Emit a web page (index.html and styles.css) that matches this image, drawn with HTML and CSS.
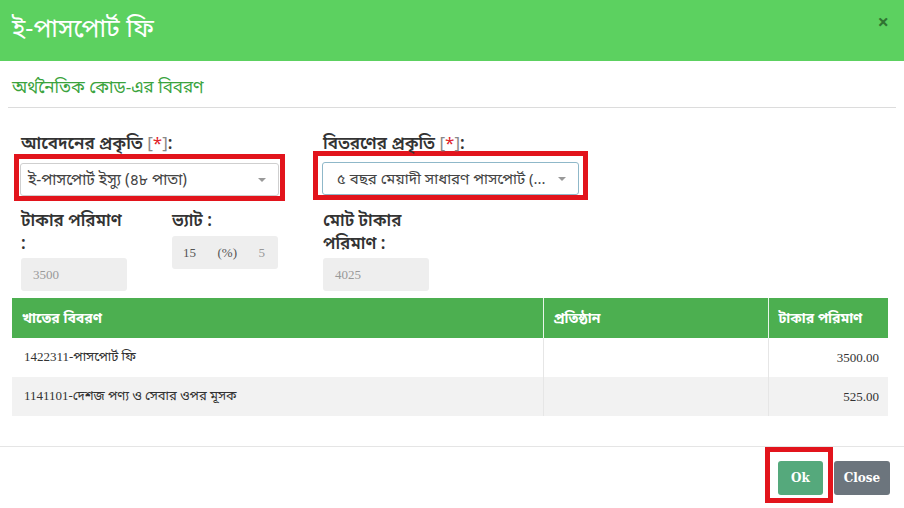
FILE: index.html
```html
<!DOCTYPE html>
<html lang="bn">
<head>
    <meta charset="UTF-8">
    <title>ই-পাসপোর্ট ফি</title>
    <link rel="stylesheet" href="styles.css">
</head>
<body>
    <div class="modal">
        <div class="modal-header">
            <h2>ই-পাসপোর্ট ফি</h2>
            <span class="close-x">&times;</span>
        </div>

        <div class="modal-body">
            <h4 class="section-title">অর্থনৈতিক কোড-এর বিবরণ</h4>

            <div class="form-row">
                <div class="col">
                    <label>আবেদনের প্রকৃতি <span class="req">[<b>*</b>]</span>:</label>
                    <div class="mark mark-one">
                        <div class="select">
                            <span>ই-পাসপোর্ট ইস্যু (৪৮ পাতা)</span>
                            <i class="caret"></i>
                        </div>
                    </div>
                </div>
                <div class="col col-two">
                    <label>বিতরণের প্রকৃতি <span class="req">[<b>*</b>]</span>:</label>
                    <div class="mark mark-two">
                        <div class="select select-blue">
                            <span>৫ বছর মেয়াদী সাধারণ পাসপোর্ট (...</span>
                            <i class="caret"></i>
                        </div>
                    </div>
                </div>
            </div>

            <div class="form-row amounts">
                <div class="small-col">
                    <label>টাকার পরিমাণ<br>:</label>
                    <div class="input">3500</div>
                </div>
                <div class="small-col">
                    <label>ভ্যাট :</label>
                    <div class="input-group">
                        <span>15</span>
                        <span>(%)</span>
                        <span>5</span>
                    </div>
                </div>
                <div class="small-col">
                    <label>মোট টাকার<br>পরিমাণ :</label>
                    <div class="input">4025</div>
                </div>
            </div>

            <table class="fee-table">
                <thead>
                    <tr>
                        <th class="c-desc">খাতের বিবরণ</th>
                        <th class="c-org">প্রতিষ্ঠান</th>
                        <th class="c-amt">টাকার পরিমাণ</th>
                    </tr>
                </thead>
                <tbody>
                    <tr>
                        <td>1422311-পাসপোর্ট ফি</td>
                        <td></td>
                        <td class="num">3500.00</td>
                    </tr>
                    <tr>
                        <td>1141101-দেশজ পণ্য ও সেবার ওপর মূসক</td>
                        <td></td>
                        <td class="num">525.00</td>
                    </tr>
                </tbody>
            </table>
        </div>

        <div class="modal-footer">
            <div class="mark mark-ok">
                <button class="btn btn-ok">Ok</button>
            </div>
            <button class="btn btn-close">Close</button>
        </div>
    </div>
</body>
</html>
```

FILE: styles.css
```css
* {
    margin: 0;
    padding: 0;
    box-sizing: border-box;
}

body {
    font-family: "Noto Sans", "Noto Sans Bengali", sans-serif;
    background: #ffffff;
    color: #333;
    width: 904px;
    height: 508px;
    overflow: hidden;
}

.modal-header {
    background: #5cd160;
    height: 61px;
    display: flex;
    align-items: center;
    justify-content: space-between;
    padding: 0 15px 4px 12px;
}

.modal-header h2 {
    color: #fff;
    font-size: 25px;
    font-weight: 400;
}

.close-x {
    color: #1d4d1e;
    font-size: 20px;
    font-weight: bold;
    opacity: 0.7;
    margin-bottom: 14px;
}

.modal-body {
    padding: 0 12px 0 12px;
}

.section-title {
    color: #3aa33d;
    font-size: 17px;
    font-weight: 400;
    padding: 14px 0 7px 4px;
    margin: 0 -4px;
    border-bottom: 1px solid #dcdcdc;
}

.form-row {
    display: flex;
    padding-left: 2px;
}

.form-row:first-of-type {
    margin-top: 24px;
}

.col {
    width: 299px;
}

.col label {
    display: block;
    font-size: 17px;
    font-weight: 600;
    color: #333;
    padding-left: 7px;
    line-height: 22px;
}

.col-two label {
    padding-left: 10px;
}

.req {
    color: #888;
    font-weight: 400;
}

.req b {
    color: #e0242b;
    font-weight: 400;
}

.mark {
    border: 5px solid #e2141c;
}

.mark-one {
    width: 271px;
    padding: 4px 1px 0 1px;
}

.mark-two {
    width: 275px;
    padding: 6px 4px 0 4px;
    margin-top: -3px;
}

.select {
    height: 33px;
    border: 1px solid #cfcfcf;
    border-radius: 3px;
    display: flex;
    align-items: center;
    justify-content: space-between;
    padding: 0 12px 0 7px;
    font-size: 15.5px;
    color: #444;
    white-space: nowrap;
}

.select-blue {
    border-color: #8fb8c9;
    padding-left: 14px;
    font-size: 15px;
}

.caret {
    width: 0;
    height: 0;
    border-left: 4px solid transparent;
    border-right: 4px solid transparent;
    border-top: 4px solid #999;
}

.amounts {
    margin-top: 7px;
}

.small-col {
    width: 151px;
    padding-left: 7px;
}

.small-col label {
    display: block;
    font-size: 17px;
    font-weight: 600;
    line-height: 23px;
    height: 50px;
}

.small-col:nth-child(2) label {
    height: 28px;
}

.input {
    width: 106px;
    height: 33px;
    background: #eeeeee;
    border-radius: 3px;
    display: flex;
    align-items: center;
    padding-left: 12px;
    font-family: "Liberation Serif", serif;
    font-size: 13px;
    color: #999;
}

.input-group {
    width: 106px;
    height: 33px;
    background: #eeeeee;
    border-radius: 3px;
    display: flex;
    align-items: center;
    justify-content: space-between;
    padding: 0 13px 0 11px;
    font-family: "Liberation Serif", serif;
    font-size: 13px;
    color: #555;
}

.input-group span:last-child {
    color: #999;
}

.fee-table {
    margin-top: 7px;
    width: 876px;
    border-collapse: collapse;
    font-family: "Liberation Serif", "Noto Sans Bengali", serif;
    font-size: 13px;
}

.fee-table th {
    background: #4caf50;
    color: #fff;
    height: 40px;
    text-align: left;
    padding: 0 10px;
    font-family: "Noto Sans", "Noto Sans Bengali", sans-serif;
    font-weight: 700;
    font-size: 14px;
    border-left: 1px solid #e8f5e9;
}

.fee-table th:first-child {
    border-left: none;
}

.c-desc { width: 531px; }
.c-org { width: 225px; }
.c-amt { width: 120px; }

.fee-table td {
    height: 39px;
    padding: 0 12px;
    color: #333;
    border-left: 1px solid #e6e6e6;
}

.fee-table td:first-child {
    border-left: none;
}

.fee-table tbody tr:nth-child(2) td {
    background: #f2f2f2;
}

.fee-table td.num {
    text-align: right;
    padding-right: 9px;
}

.modal-footer {
    margin-top: 30px;
    border-top: 1px solid #e5e5e5;
    display: flex;
    justify-content: flex-end;
    align-items: flex-start;
    padding-right: 14px;
}

.mark-ok {
    padding: 9px 5px 3px 8px;
}

.btn {
    border: none;
    border-radius: 3px;
    color: #fff;
    font-family: "DejaVu Serif", serif;
    font-size: 12px;
    font-weight: bold;
    height: 34px;
    cursor: pointer;
}

.btn-ok {
    background: #55a97c;
    width: 45px;
}

.btn-close {
    background: #6c757d;
    width: 56px;
    margin-top: 14px;
    margin-left: 1px;
}
```
